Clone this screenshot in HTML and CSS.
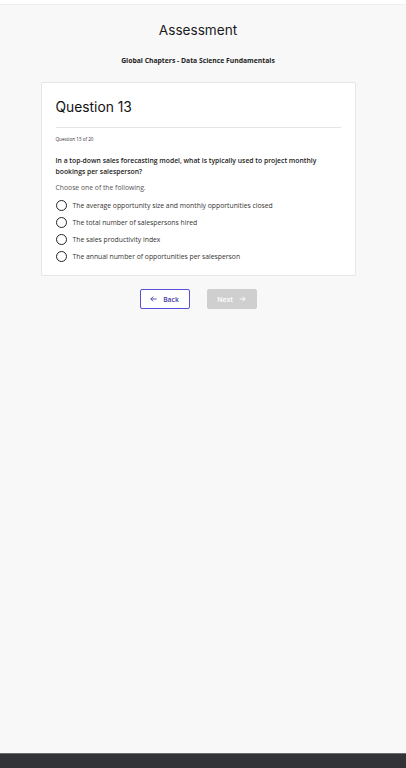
FILE: index.html
```html
<!DOCTYPE html>
<html>
<head>
<meta charset="utf-8">
<link rel="stylesheet" href="styles.css">
</head>
<body>
<div class="page">
  <div class="topbar"></div>
  <main class="main">
    <h1 class="title">Assessment</h1>
    <p class="course">Global Chapters - Data Science Fundamentals</p>
    <section class="card">
      <h2 class="qtitle">Question 13</h2>
      <div class="divider"></div>
      <p class="count">Question 13 of 20</p>
      <p class="question">In a top-down sales forecasting model, what is typically used to project monthly bookings per salesperson?</p>
      <p class="hint">Choose one of the following.</p>
      <ul class="options">
        <li class="option"><span class="radio"></span>The average opportunity size and monthly opportunities closed</li>
        <li class="option"><span class="radio"></span>The total number of salespersons hired</li>
        <li class="option"><span class="radio"></span>The sales productivity index</li>
        <li class="option"><span class="radio"></span>The annual number of opportunities per salesperson</li>
      </ul>
    </section>
    <div class="actions">
      <button class="btn back"><svg class="arrow" width="7" height="6" viewBox="0 0 7 6"><path d="M6.5 3H0.8M3.2 0.6L0.8 3L3.2 5.4" fill="none" stroke="currentColor" stroke-width="0.9"/></svg>Back</button>
      <button class="btn next">Next<svg class="arrow" width="7" height="6" viewBox="0 0 7 6"><path d="M0.5 3H6.2M3.8 0.6L6.2 3L3.8 5.4" fill="none" stroke="currentColor" stroke-width="0.9"/></svg></button>
    </div>
  </main>
  <footer class="footer"></footer>
</div>
</body>
</html>
```

FILE: styles.css
```css
* { box-sizing: border-box; }
html, body { margin: 0; padding: 0; }
body {
  background: #f8f8f8;
  font-family: "Open Sans", "Liberation Sans", sans-serif;
  color: #222;
}
.page {
  min-height: 768px;
  display: flex;
  flex-direction: column;
}
.topbar {
  height: 5px;
  background: #ffffff;
  border-bottom: 1px solid #efefef;
}
.main {
  flex: 1;
  display: flex;
  flex-direction: column;
  align-items: center;
  padding-right: 10px;
}
.title {
  margin: 16px 0 0;
  font-family: Inter, "Liberation Sans", sans-serif;
  font-weight: 400;
  font-size: 13.6px;
  line-height: 18px;
  color: #1a1a1a;
}
.course {
  margin: 17px 0 0;
  font-size: 6.8px;
  font-weight: 700;
  line-height: 10px;
  color: #222;
}
.card {
  margin-top: 16px;
  width: 315px;
  background: #fff;
  border: 1px solid #e6e6e6;
  border-radius: 2px;
  padding: 14px 14px 13px;
}
.qtitle {
  margin: 0;
  font-family: Inter, "Liberation Sans", sans-serif;
  font-weight: 400;
  font-size: 13.8px;
  line-height: 20px;
  color: #111;
}
.divider {
  margin-top: 10px;
  height: 1px;
  background: #e4e4e4;
}
.count {
  margin: 8px 0 0;
  font-size: 4.6px;
  line-height: 7px;
  color: #333;
}
.question {
  margin: 12px 0 0;
  font-size: 6.8px;
  font-weight: 600;
  line-height: 11px;
  color: #222;
}
.hint {
  margin: 5px 0 0;
  font-size: 6.8px;
  line-height: 11px;
  color: #555;
}
.options {
  list-style: none;
  margin: 7px 0 0;
  padding: 0;
  display: flex;
  flex-direction: column;
  gap: 6px;
}
.option {
  display: flex;
  align-items: center;
  font-size: 6.8px;
  line-height: 11px;
  color: #333;
}
.radio {
  width: 11px;
  height: 11px;
  border: 1.3px solid #222;
  border-radius: 50%;
  margin-right: 6px;
  flex-shrink: 0;
}
.actions {
  margin-top: 13px;
  display: flex;
  gap: 17px;
}
.btn {
  width: 50px;
  height: 20px;
  font-family: "Open Sans", "Liberation Sans", sans-serif;
  font-size: 6.8px;
  font-weight: 600;
  border-radius: 2px;
  display: flex;
  align-items: center;
  justify-content: center;
  gap: 6px;
  padding: 0;
}
.back {
  background: #fff;
  border: 1px solid #5a4fd8;
  color: #3f3aa8;
}
.next {
  background: #cfcfcf;
  border: 1px solid #cfcfcf;
  color: #fff;
}
.arrow { display: block; flex-shrink: 0; }
.footer {
  height: 15px;
  background: #323336;
  border-top: 1px solid #6b6b6b;
}
```
